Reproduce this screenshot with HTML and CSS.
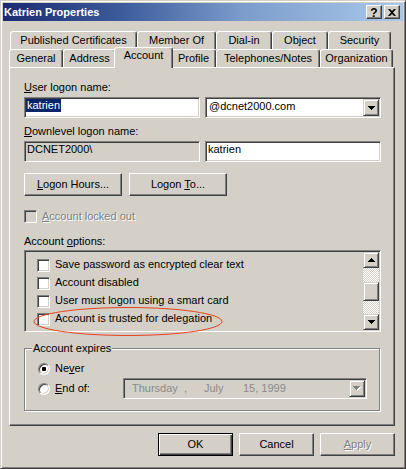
FILE: index.html
```html
<!DOCTYPE html>
<html lang="en">
<head>
<meta charset="utf-8">
<title>Katrien Properties</title>
<link rel="stylesheet" href="styles.css">
</head>
<body>
<div class="window">
  <div class="titlebar">
    <span class="title">Katrien Properties</span>
    <div class="caption-buttons">
      <span class="cbtn help">?</span>
      <span class="cbtn close"><svg width="8" height="7" viewBox="0 0 8 7"><path d="M0 0h2l2 2 2-2h2L5 3.5 8 7H6L4 5 2 7H0l3-3.5z" fill="#000"/></svg></span>
    </div>
  </div>
  <div class="content">
    <div class="tabs">
      <div class="tabrow back">
        <div class="tab t-pc">Published Certificates</div>
        <div class="tab t-mo">Member Of</div>
        <div class="tab t-di">Dial-in</div>
        <div class="tab t-ob">Object</div>
        <div class="tab t-se">Security</div>
      </div>
      <div class="tabrow front">
        <div class="tab t-ge">General</div>
        <div class="tab t-ad">Address</div>
        <div class="tab t-ac active">Account</div>
        <div class="tab t-pr">Profile</div>
        <div class="tab t-te">Telephones/Notes</div>
        <div class="tab t-or">Organization</div>
      </div>
    </div>
    <div class="panel">
      <div class="label l-first"><u>U</u>ser logon name:</div>
      <div class="field-row r-first">
        <div class="edit"><span class="sel">katrien</span></div>
        <div class="combo">
          <span class="combo-text">@dcnet2000.com</span>
          <span class="arrow-btn"><svg width="7" height="4" viewBox="0 0 7 4"><path d="M0 0h7v1H6v1H5v1H4v1H3V3H2V2H1V1H0z" fill="#000"/></svg></span>
        </div>
      </div>
      <div class="label l-second"><u>D</u>ownlevel logon name:</div>
      <div class="field-row r-second">
        <div class="edit readonly">DCNET2000\</div>
        <div class="edit">katrien</div>
      </div>
      <div class="button-row">
        <button class="btn wide"><span><u>L</u>ogon Hours...</span></button>
        <button class="btn wide"><span>Logon <u>T</u>o...</span></button>
      </div>
      <div class="check-row disabled">
        <span class="checkbox"></span>
        <span class="check-label"><u>A</u>ccount locked out</span>
      </div>
      <div class="label l-third">Account <u>o</u>ptions:</div>
      <div class="listbox">
        <div class="list-items">
          <div class="list-row"><span class="checkbox"></span><span class="list-label">Save password as encrypted clear text</span></div>
          <div class="list-row"><span class="checkbox"></span><span class="list-label">Account disabled</span></div>
          <div class="list-row"><span class="checkbox"></span><span class="list-label">User must logon using a smart card</span></div>
          <div class="list-row"><span class="checkbox"></span><span class="list-label">Account is trusted for delegation</span></div>
        </div>
        <div class="scrollbar">
          <span class="sb-btn"><svg width="7" height="4" viewBox="0 0 7 4"><path d="M3 0h1v1h1v1h1v1h1v1H0V3h1V2h1V1h1z" fill="#000"/></svg></span>
          <span class="sb-track t1"></span>
          <span class="sb-thumb"></span>
          <span class="sb-track t2"></span>
          <span class="sb-btn"><svg width="7" height="4" viewBox="0 0 7 4"><path d="M0 0h7v1H6v1H5v1H4v1H3V3H2V2H1V1H0z" fill="#000"/></svg></span>
        </div>
      </div>
      <div class="group">
        <span class="group-title">Account expires</span>
        <div class="radio-row r-never">
          <span class="radio"><span class="dot"></span></span>
          <span class="radio-label">Ne<u>v</u>er</span>
        </div>
        <div class="radio-row r-end">
          <span class="radio"></span>
          <span class="radio-label fixed"><u>E</u>nd of:</span>
          <div class="datepicker">
            <span class="d-day">Thursday</span><span class="d-comma">,</span><span class="d-month">July</span><span class="d-rest">15, 1999</span>
            <span class="arrow-btn disabled-arrow"><svg width="8" height="5" viewBox="0 0 8 5"><path d="M1 1h7v1H7v1H6v1H5v1H4V4H3V3H2V2H1z" fill="#fff"/><path d="M0 0h7v1H6v1H5v1H4v1H3V3H2V2H1V1H0z" fill="#808080"/></svg></span>
          </div>
        </div>
      </div>
      <svg class="annotation" width="200" height="34" viewBox="0 0 200 34"><ellipse cx="98" cy="16.5" rx="94" ry="14" fill="none" stroke="#e4421e" stroke-width="1"/></svg>
    </div>
    <div class="dialog-buttons">
      <button class="btn dlg default"><span>OK</span></button>
      <button class="btn dlg"><span>Cancel</span></button>
      <button class="btn dlg disabled"><span><u>A</u>pply</span></button>
    </div>
  </div>
</div>
</body>
</html>
```

FILE: styles.css
```css
* { box-sizing: border-box; }

html, body {
  margin: 0;
  padding: 0;
}

body {
  background: #d4d0c8;
  font-family: "Liberation Sans", Arial, sans-serif;
  font-size: 11px;
  line-height: 13px;
  color: #000;
}

.window {
  width: 406px;
  height: 469px;
  background: #d4d0c8;
  border: 1px solid;
  border-color: #d4d0c8 #404040 #404040 #d4d0c8;
  box-shadow: inset 1px 1px #fff, inset -1px -1px #808080;
  padding: 2px;
  display: flex;
  flex-direction: column;
}

/* Title bar */
.titlebar {
  height: 18px;
  flex: none;
  display: flex;
  align-items: center;
  padding: 0 3px 0 1px;
  background: linear-gradient(to right, #1a2a72 0%, #3d5c9c 30%, #7c9ccc 60%, #aac9ea 100%);
}

.title {
  color: #fff;
  font-weight: bold;
  flex: 1;
  white-space: nowrap;
}

.caption-buttons {
  display: flex;
  gap: 2px;
}

.cbtn {
  width: 16px;
  height: 14px;
  display: flex;
  align-items: center;
  justify-content: center;
  background: #d4d0c8;
  border: 1px solid;
  border-color: #fff #404040 #404040 #fff;
  box-shadow: inset -1px -1px #808080;
}

.cbtn.help {
  font-weight: bold;
  font-size: 12px;
  line-height: 12px;
  padding-top: 1px;
}

/* Content */
.content {
  flex: 1;
  display: flex;
  flex-direction: column;
  padding: 0 8px 0 6px;
}

.tabs {
  margin-top: 10px;
}

.tabrow {
  display: flex;
  height: 18px;
}

.tabrow.back {
  margin-left: 1px;
}

.tabrow.front {
  align-items: flex-end;
}

.tab {
  height: 18px;
  flex: none;
  border: 1px solid;
  border-bottom: none;
  border-color: #fff #404040 transparent #fff;
  border-radius: 3px 3px 0 0;
  box-shadow: inset -1px 0 #808080;
  background: #d4d0c8;
  text-align: center;
  padding-top: 2px;
  white-space: nowrap;
}

.t-pc { width: 127px; }
.t-mo { width: 79px; }
.t-di { width: 56px; }
.t-ob { width: 56px; }
.t-se { width: 63px; }

.t-ge { width: 54px; }
.t-ad { width: 53px; }
.t-ac { width: 55px; }
.t-pr { width: 45px; }
.t-te { width: 104px; }
.t-or { width: 73px; }

.tab.active {
  height: 21px;
  width: 59px;
  margin: 0 -2px -1px;
  padding-top: 1px;
  z-index: 1;
}

/* Panel */
.panel {
  position: relative;
  height: 359px;
  flex: none;
  border: 1px solid;
  border-color: #fff #404040 #404040 #fff;
  box-shadow: inset -1px -1px #808080;
  padding: 13px 13px 0 14px;
  display: flex;
  flex-direction: column;
}

.label { white-space: nowrap; }
.l-second { margin-top: 7px; }
.l-third { margin-top: 12px; }

.field-row {
  display: flex;
  gap: 5px;
  margin-top: 3px;
}

.edit,
.combo,
.datepicker,
.listbox {
  border: 1px solid;
  border-color: #808080 #fff #fff #808080;
  box-shadow: inset 1px 1px #404040, inset -1px -1px #d4d0c8;
}

.edit {
  width: 176px;
  height: 21px;
  background: #fff;
  padding: 1px 2px 0 2px;
  white-space: nowrap;
}

.edit.readonly {
  background: #d4d0c8;
}

.sel {
  display: inline-block;
  background: #0a246a;
  color: #fff;
  margin-left: -1px;
  padding: 0 1px 0 1px;
}

.combo {
  width: 176px;
  height: 21px;
  background: #fff;
  padding: 1px;
  display: flex;
  align-items: flex-start;
}

.combo-text {
  flex: 1;
  padding: 1px 0 0 2px;
  white-space: nowrap;
}

.arrow-btn,
.sb-btn,
.sb-thumb {
  background: #d4d0c8;
  border: 1px solid;
  border-color: #d4d0c8 #404040 #404040 #d4d0c8;
  box-shadow: inset 1px 1px #fff, inset -1px -1px #808080;
}

.arrow-btn {
  width: 16px;
  height: 17px;
  flex: none;
  display: flex;
  align-items: center;
  justify-content: center;
}

.arrow-btn svg,
.sb-btn svg {
  display: block;
}

/* Buttons */
.button-row {
  display: flex;
  gap: 7px;
  margin-top: 11px;
}

.btn {
  height: 23px;
  padding: 0;
  margin: 0;
  font: inherit;
  color: #000;
  background: #d4d0c8;
  border: 1px solid;
  border-color: #fff #404040 #404040 #fff;
  box-shadow: inset -1px -1px #808080;
  display: flex;
  align-items: center;
  justify-content: center;
  white-space: nowrap;
}

.btn.wide { width: 98px; }
.btn.dlg { width: 75px; }

.btn.default {
  border-color: #000;
  box-shadow: inset 1px 1px #fff, inset -1px -1px #404040, inset -2px -2px #808080;
}

.btn.disabled {
  color: #808080;
  text-shadow: 1px 1px #fff;
}

/* Checkboxes */
.checkbox {
  width: 13px;
  height: 13px;
  flex: none;
  background: #fff;
  border: 1px solid;
  border-color: #808080 #fff #fff #808080;
  box-shadow: inset 1px 1px #404040, inset -1px -1px #d4d0c8;
}

.check-row {
  display: flex;
  align-items: center;
  gap: 5px;
  height: 13px;
  margin-top: 14px;
  white-space: nowrap;
}

.check-row.disabled .checkbox {
  background: #d4d0c8;
}

.check-row.disabled .check-label {
  color: #808080;
  text-shadow: 1px 1px #fff;
}

/* List box */
.listbox {
  margin-top: 2px;
  height: 82px;
  padding: 1px;
  display: flex;
  background: #d4d0c8;
}

.list-items {
  flex: 1;
  padding: 4px 0 0 11px;
}

.list-row {
  display: flex;
  align-items: flex-start;
  gap: 5px;
  height: 18px;
  white-space: nowrap;
}

.list-row .checkbox { margin-top: 3px; }
.list-row .list-label { margin-top: 2px; }

.scrollbar {
  width: 16px;
  display: flex;
  flex-direction: column;
}

.sb-btn {
  height: 16px;
  flex: none;
  display: flex;
  align-items: center;
  justify-content: center;
}

.sb-track {
  flex: none;
  background: repeating-conic-gradient(#fff 0 25%, #d4d0c8 0 50%) 0 0 / 2px 2px;
}

.sb-track.t1 { height: 14px; }
.sb-track.t2 { height: 13px; }

.sb-thumb {
  height: 19px;
  flex: none;
}

/* Group box */
.group {
  margin-top: 16px;
  width: 356px;
  height: 63px;
  border: 1px solid #808080;
  box-shadow: inset 1px 1px #fff, 1px 1px #fff;
  display: flex;
  flex-direction: column;
}

.group-title {
  align-self: flex-start;
  margin: -7px 0 0 7px;
  padding: 0 1px;
  background: #d4d0c8;
  white-space: nowrap;
}

.radio-row {
  display: flex;
  align-items: center;
  gap: 5px;
  margin-left: 13px;
  white-space: nowrap;
}

.r-never {
  margin-top: 7px;
  height: 13px;
}

.r-end {
  margin-top: 3px;
  height: 21px;
}

.radio {
  width: 12px;
  height: 12px;
  flex: none;
  border-radius: 50%;
  background: #fff;
  border: 1px solid;
  border-color: #808080 #fff #fff #808080;
  box-shadow: inset 1px 1px #404040, inset -1px -1px #d4d0c8;
  display: flex;
  align-items: center;
  justify-content: center;
}

.dot {
  width: 4px;
  height: 4px;
  border-radius: 1px;
  background: #000;
}

.radio-label.fixed {
  width: 63px;
}

.datepicker {
  width: 244px;
  height: 21px;
  background: #d4d0c8;
  padding: 1px 1px 1px 8px;
  display: flex;
  align-items: center;
  color: #8a8a8a;
  white-space: nowrap;
}

.d-day { display: inline-block; width: 52px; }
.d-comma { display: inline-block; width: 20px; }
.d-month { display: inline-block; width: 39px; }
.d-rest { flex: 1; }

/* Annotation */
.annotation {
  position: absolute;
  left: 20px;
  top: 237px;
  overflow: visible;
  pointer-events: none;
}

/* Dialog buttons */
.dialog-buttons {
  display: flex;
  justify-content: flex-end;
  gap: 6px;
  margin-top: 7px;
}
```
